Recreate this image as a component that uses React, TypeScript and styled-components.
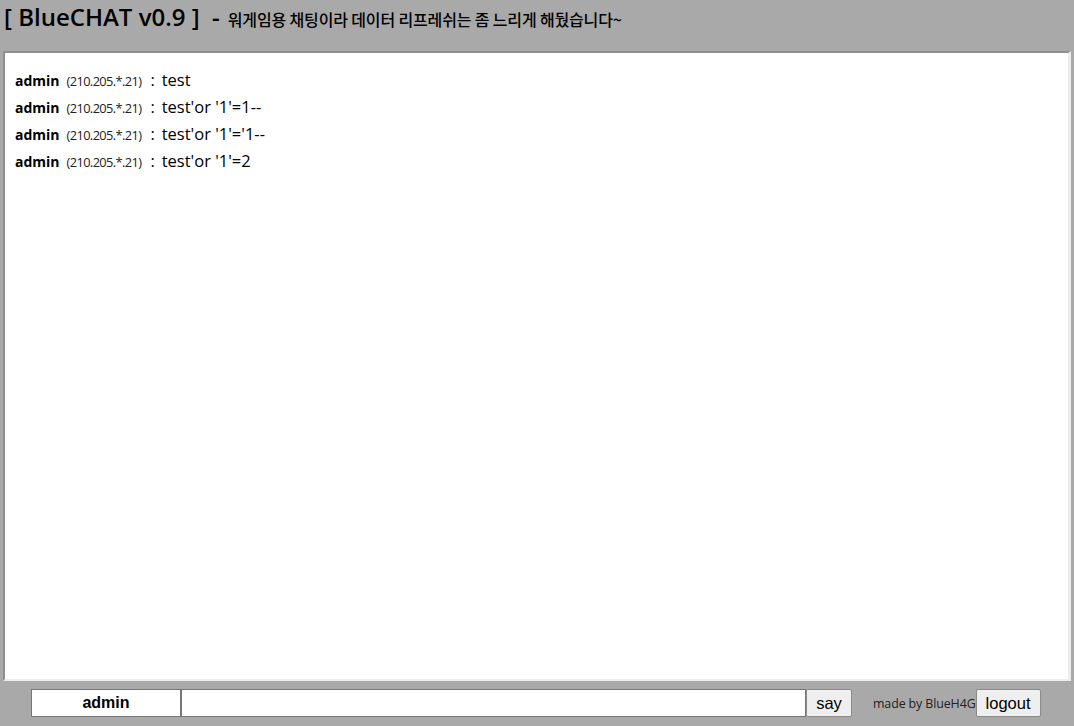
import React from "react";
import styled, { createGlobalStyle } from "styled-components";

const Global = createGlobalStyle`
  html, body { margin: 0; padding: 0; background: #a9a9a9; }
  body { font-family: "Noto Sans CJK KR", "Noto Sans", sans-serif; color: #000; }
`;

const Page = styled.div`
  width: 1074px;
  height: 726px;
  display: flex;
  flex-direction: column;
  overflow: hidden;
`;

const Header = styled.div`
  display: flex;
  align-items: baseline;
  gap: 8px;
  padding: 0 0 0 4px;
  height: 51px;
  box-sizing: border-box;
`;

const Title = styled.span`
  font-family: "Open Sans", "Noto Sans", sans-serif;
  font-weight: 600;
  font-size: 24px;
  line-height: normal;
  white-space: pre;
`;

const Subtitle = styled.span`
  font-family: "Noto Sans CJK KR", sans-serif;
  font-size: 16px;
  font-weight: 500;
  letter-spacing: -0.15px;
`;

const ChatBox = styled.div`
  margin: 0 3px 0 3px;
  height: 630px;
  box-sizing: border-box;
  background: #fff;
  border-style: solid;
  border-width: 2px 3px 2px 2px;
  border-color: #8e8e8e #ececec #ececec #8e8e8e;
  padding: 15px 10px;
`;

const Line = styled.div`
  display: flex;
  align-items: baseline;
  height: 27px;
  white-space: pre;
`;

const Nick = styled.span`
  font-family: "Open Sans", sans-serif;
  font-weight: 700;
  font-size: 14px;
`;

const Ip = styled.span`
  font-family: "Open Sans", sans-serif;
  font-size: 12.8px;
  letter-spacing: -0.6px;
  margin-left: 7px;
  color: #222;
`;

const Colon = styled.span`
  font-family: "Open Sans", sans-serif;
  font-size: 16.5px;
  margin-left: 9px;
`;

const Msg = styled.span`
  font-family: "Open Sans", sans-serif;
  font-size: 16.5px;
  margin-left: 7px;
`;

const Footer = styled.div`
  display: flex;
  align-items: center;
  padding: 8px 0 0 31px;
`;

const NickInput = styled.input`
  width: 150px;
  height: 28px;
  box-sizing: border-box;
  border: 1px solid #767676;
  background: #fff;
  text-align: center;
  font-family: "Liberation Sans", Arial, sans-serif;
  font-weight: 700;
  font-size: 16px;
  color: #000;
  outline: none;
`;

const MsgInput = styled.input`
  width: 625px;
  height: 28px;
  box-sizing: border-box;
  border: 1px solid #767676;
  background: #fff;
  outline: none;
`;

const Button = styled.button<{ $w: number }>`
  width: ${(p) => p.$w}px;
  height: 28px;
  box-sizing: border-box;
  border: 1px solid #8a8a8a;
  border-radius: 2px;
  background: #efefef;
  font-family: "Liberation Sans", Arial, sans-serif;
  font-size: 16.5px;
  color: #000;
  padding: 0;
`;

const Credit = styled.span`
  font-family: "Open Sans", sans-serif;
  font-size: 12.4px;
  margin-left: 21px;
  white-space: nowrap;
  letter-spacing: -0.1px;
  color: #222;
`;

const messages = ["test", "test'or '1'=1--", "test'or '1'='1--", "test'or '1'=2"];

export default function App() {
  return (
    <Page>
      <Global />
      <Header>
        <Title>[ BlueCHAT v0.9 ]  -</Title>
        <Subtitle>워게임용 채팅이라 데이터 리프레쉬는 좀 느리게 해뒀습니다~</Subtitle>
      </Header>
      <ChatBox>
        {messages.map((m, i) => (
          <Line key={i}>
            <Nick>admin</Nick>
            <Ip>(210.205.*.21)</Ip>
            <Colon>:</Colon>
            <Msg>{m}</Msg>
          </Line>
        ))}
      </ChatBox>
      <Footer>
        <NickInput defaultValue="admin" readOnly />
        <MsgInput />
        <Button $w={46}>say</Button>
        <Credit>made by BlueH4G</Credit>
        <Button $w={65}>logout</Button>
      </Footer>
    </Page>
  );
}
